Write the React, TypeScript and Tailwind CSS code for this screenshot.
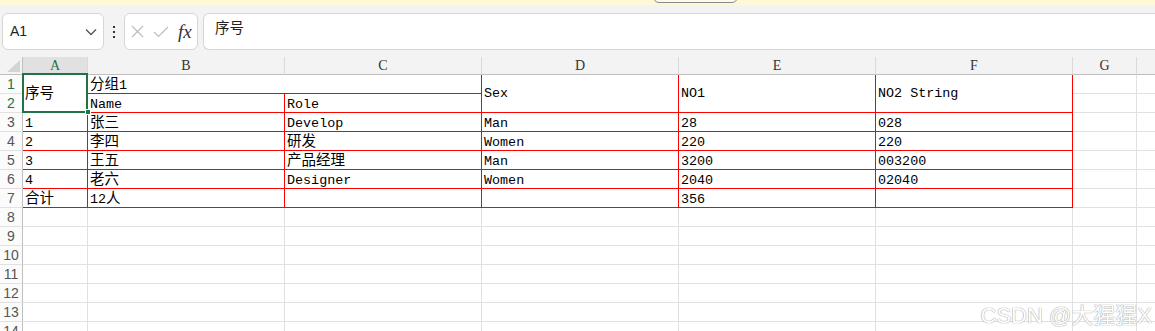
import React from "react";

const GREEN = "#217346";

const cols = ["A", "B", "C", "D", "E", "F", "G", ""];

const body: string[][] = [
  ["1", "张三", "Develop", "Man", "28", "028"],
  ["2", "李四", "研发", "Women", "220", "220"],
  ["3", "王五", "产品经理", "Man", "3200", "003200"],
  ["4", "老六", "Designer", "Women", "2040", "02040"],
  ["合计", "12人", "", "", "356", ""],
];

function Txt({ s }: { s: string }) {
  const runs = s.match(/[\u4e00-\u9fff]+|[^\u4e00-\u9fff]+/g) ?? [];
  return (
    <span className="whitespace-pre leading-[16px]">
      {runs.map((r, i) =>
        /[\u4e00-\u9fff]/.test(r) ? (
          <span key={i} className="text-[14.5px]">
            {r}
          </span>
        ) : (
          <span key={i} className="text-[13.4px]">
            {r}
          </span>
        ),
      )}
    </span>
  );
}

const cellFont = "font-['Liberation_Mono','Noto_Sans_CJK_SC',monospace] text-black";

function RowHead({ n, active }: { n: number; active?: boolean }) {
  return (
    <div
      className={`flex items-center justify-center border-r border-b border-r-[#bfbfbf] border-b-[#e1e1e1] bg-[#fbfbfb] font-['Liberation_Sans',sans-serif] text-[14px] ${
        active ? "text-[#217346]" : "text-[#555]"
      }`}
    >
      {n}
    </div>
  );
}

function Cell({
  s = "",
  red,
  center,
  span,
}: {
  s?: string;
  red?: boolean;
  center?: boolean;
  span?: string;
}) {
  return (
    <div
      className={`flex overflow-hidden border-r border-b pl-[2px] ${cellFont} ${
        red ? "border-[#ff0000]" : "border-[#e1e1e1]"
      } ${center ? "items-center" : "items-center pt-[2px]"} ${span ?? ""}`}
    >
      {s && <Txt s={s} />}
    </div>
  );
}

export default function App() {
  return (
    <div className="relative h-[331px] w-[1155px] overflow-hidden bg-white">
      {/* notice banner, mostly scrolled off */}
      <div className="flex h-[5px] overflow-hidden bg-[#fff8d6] pl-[653px]">
        <div className="-mt-[20px] h-[23px] w-[85px] shrink-0 rounded-[6px] border border-[#8a8a8a] bg-[#fffbe8]" />
      </div>

      {/* name box + formula bar */}
      <div className="flex h-[52px] items-start bg-[#f3f3f3] pt-[8px] pl-[2px]">
        <div className="flex h-[37px] w-[102px] items-center justify-between rounded-[6px] border border-[#d6d6d6] bg-white pr-[6px] pl-[7px]">
          <span className="font-['Liberation_Sans',sans-serif] text-[14px] text-[#222]">A1</span>
          <svg width="12" height="8" viewBox="0 0 12 8" fill="none" stroke="#555" strokeWidth="1.3">
            <path d="M1 1.5 L6 6.5 L11 1.5" />
          </svg>
        </div>
        <div className="flex h-[37px] w-[20px] items-center justify-center">
          <svg width="4" height="12" viewBox="0 0 4 12" fill="#333">
            <rect x="1" y="0" width="2" height="2" />
            <rect x="1" y="5" width="2" height="2" />
            <rect x="1" y="10" width="2" height="2" />
          </svg>
        </div>
        <div className="flex h-[37px] w-[74px] items-center gap-[9px] rounded-[6px] border border-[#d6d6d6] bg-white pl-[6px]">
          <svg width="13" height="13" viewBox="0 0 13 13" stroke="#bdbdbd" strokeWidth="1.2">
            <path d="M1 1 L12 12 M12 1 L1 12" />
          </svg>
          <svg width="16" height="12" viewBox="0 0 16 12" fill="none" stroke="#bdbdbd" strokeWidth="1.2">
            <path d="M1 6 L5.5 10.5 L15 1" />
          </svg>
          <span className="font-['Liberation_Serif',serif] text-[19px] leading-none text-[#333] italic">
            fx
          </span>
        </div>
        <div className="ml-[5px] flex h-[37px] flex-1 items-start rounded-l-[6px] border border-r-0 border-[#d6d6d6] bg-white pt-[2px] pl-[11px]">
          <span className="font-['Noto_Sans_CJK_SC',sans-serif] text-[14.5px] text-[#222]">序号</span>
        </div>
      </div>

      {/* sheet grid */}
      <div className="relative">
        <div className="grid w-[1255px] grid-cols-[23px_65px_197px_197px_197px_197px_197px_64px_118px] grid-rows-[18px_repeat(14,19px)]">
          {/* select-all corner */}
          <div className="relative border-r border-b border-[#bfbfbf] bg-[#f3f3f3]">
            <svg className="absolute right-[2px] bottom-[2px]" width="13" height="12" viewBox="0 0 13 12">
              <path d="M13 0 L13 12 L0 12 Z" fill="#d4d4d4" />
            </svg>
          </div>
          {cols.map((c, i) => (
            <div
              key={i}
              className={`flex items-center justify-center border-r border-b border-r-[#dadada] border-b-[#bfbfbf] font-['Liberation_Serif',serif] text-[14px] ${
                i === 0 ? "bg-[#e1e1e1] text-[#217346]" : "bg-[#f3f3f3] text-[#333]"
              }`}
            >
              {c}
            </div>
          ))}

          {/* row 1 */}
          <RowHead n={1} active />
          <Cell s="序号" red center span="row-span-2" />
          <div className={`col-span-2 flex items-center border-r border-b border-[#ff0000] pt-[3px] pl-[2px] ${cellFont}`}>
            <Txt s="分组1" />
          </div>
          <Cell s="Sex" red center span="row-span-2" />
          <Cell s="NO1" red center span="row-span-2" />
          <Cell s="NO2 String" red center span="row-span-2" />
          <Cell />
          <Cell />

          {/* row 2 */}
          <RowHead n={2} active />
          <Cell s="Name" red />
          <Cell s="Role" red />
          <Cell />
          <Cell />

          {body.map((r, ri) => (
            <React.Fragment key={ri}>
              <RowHead n={ri + 3} />
              {r.map((v, ci) => (
                <Cell key={ci} s={v} red />
              ))}
              <Cell />
              <Cell />
            </React.Fragment>
          ))}

          {[8, 9, 10, 11, 12, 13, 14].map((n) => (
            <React.Fragment key={n}>
              <RowHead n={n} />
              {cols.map((_, i) => (
                <Cell key={i} />
              ))}
            </React.Fragment>
          ))}
        </div>

        {/* active cell A1:A2 */}
        <div
          className="pointer-events-none absolute top-[16px] left-[22px] h-[40px] w-[66px] border-2"
          style={{ borderColor: GREEN }}
        />
        <div className="absolute top-[52px] left-[85px] h-[6px] w-[6px] border border-white bg-[#217346]" />
      </div>

      {/* watermark */}
      <div className="pointer-events-none absolute right-[3px] bottom-[4px] font-['Liberation_Sans','Noto_Sans_CJK_SC',sans-serif] text-[22px] leading-none text-white [text-shadow:0_0_1px_#999,0_0_1px_#999]">
        CSDN @大猩猩X
      </div>
    </div>
  );
}
